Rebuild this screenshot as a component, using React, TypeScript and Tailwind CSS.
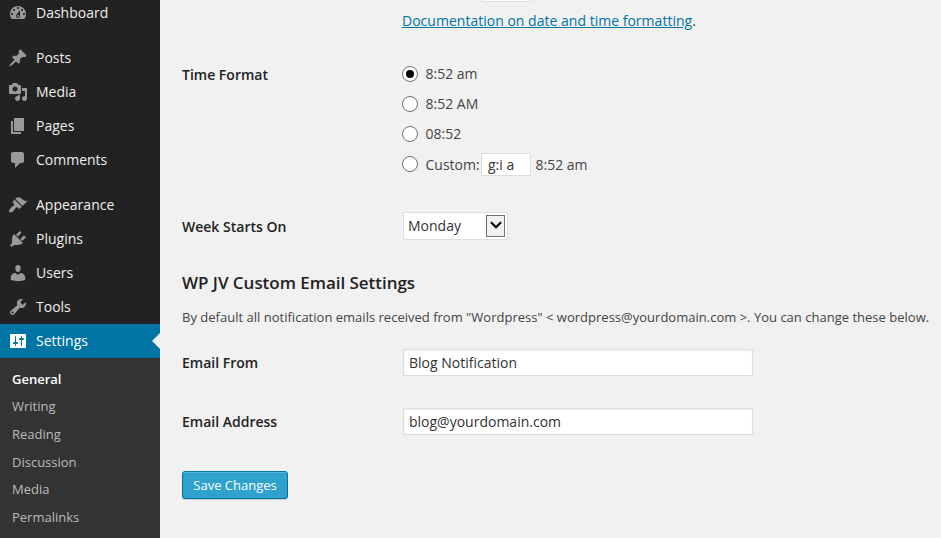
import type { ReactNode } from "react";

const icons = {
  dashboard:
    "M3.76 16h12.48c1.1-1.37 1.76-3.11 1.76-5 0-4.42-3.58-8-8-8s-8 3.58-8 8c0 1.89.66 3.63 1.76 5zM10 4c.55 0 1 .45 1 1s-.45 1-1 1-1-.45-1-1 .45-1 1-1zM6 6c.55 0 1 .45 1 1s-.45 1-1 1-1-.45-1-1 .45-1 1-1zm8 0c.55 0 1 .45 1 1s-.45 1-1 1-1-.45-1-1 .45-1 1-1zm-5.37 5.55L12 7v6c0 1.1-.9 2-2 2s-2-.9-2-2c0-.57.24-1.08.63-1.45zM4 10c.55 0 1 .45 1 1s-.45 1-1 1-1-.45-1-1 .45-1 1-1zm12 0c.55 0 1 .45 1 1s-.45 1-1 1-1-.45-1-1 .45-1 1-1zm-5 3c0-.55-.45-1-1-1s-1 .45-1 1 .45 1 1 1 1-.45 1-1z",
  posts:
    "M10.44 3.02l1.82-1.82 6.36 6.35-1.83 1.82c-1.05-.68-2.48-.57-3.41.36l-.75.75c-.92.93-1.04 2.35-.35 3.41l-1.83 1.82-2.41-2.41-2.8 2.79c-.42.42-3.38 2.71-3.8 2.29s1.86-3.39 2.28-3.81l2.79-2.79L4.1 9.36l1.83-1.82c1.05.69 2.48.57 3.4-.36l.75-.75c.93-.92 1.05-2.35.36-3.41z",
  media:
    "M13 11V4c0-.55-.45-1-1-1h-1.67L9 1H5L3.67 3H2c-.55 0-1 .45-1 1v7c0 .55.45 1 1 1h10c.55 0 1-.45 1-1zM7 4.5c1.38 0 2.5 1.12 2.5 2.5S8.38 9.5 7 9.5 4.5 8.38 4.5 7 5.62 4.5 7 4.5zM14 6h5v10.5c0 1.38-1.12 2.5-2.5 2.5S14 17.88 14 16.5s1.12-2.5 2.5-2.5c.17 0 .34.02.5.05V9h-3V6zm-4 8.05V13h2v3.5c0 1.38-1.12 2.5-2.5 2.5S7 17.88 7 16.5 8.12 14 9.5 14c.17 0 .34.02.5.05z",
  pages: "M6 15V2h10v13H6zm-1 1h8v2H3V5h2v11z",
  comments:
    "M5 2h9c1.1 0 2 .9 2 2v7c0 1.1-.9 2-2 2h-2l-5 5v-5H5c-1.1 0-2-.9-2-2V4c0-1.1.9-2 2-2z",
  appearance:
    "M14.48 11.06L7.41 3.99l1.5-1.5c.5-.56 2.3-.47 3.51.32 1.21.8 1.43 1.28 2.91 2.1 1.18.64 2.45 1.26 4.45.85zm-.71.71L6.7 4.7 4.93 6.47c-.39.39-.39 1.02 0 1.41l1.06 1.06c.39.39.39 1.03 0 1.42-.6.6-1.43 1.11-2.21 1.69-.35.26-.7.53-1.01.84C1.43 14.23.4 16.08 1.4 17.07c.99 1 2.84-.03 4.18-1.36.31-.31.58-.66.85-1.02.57-.78 1.08-1.61 1.69-2.21.39-.39 1.02-.39 1.41 0l1.06 1.06c.39.39 1.02.39 1.41 0z",
  plugins:
    "M13.11 4.36L9.87 7.6 8 5.73l3.24-3.24c.35-.34 1.05-.2 1.56.32.52.51.66 1.21.31 1.55zm-8 1.77l.91-1.12 9.01 9.01-1.19.84c-.71.71-2.63 1.16-3.82 1.16H6.14L4.9 17.26c-.59.59-1.54.59-2.12 0-.59-.58-.59-1.53 0-2.12l1.24-1.24v-3.88c0-1.13.4-3.19 1.09-3.89zm7.26 3.97l3.24-3.24c.34-.35 1.04-.21 1.55.31.52.51.66 1.21.31 1.55l-3.24 3.25z",
  users:
    "M10 9.25c-2.27 0-2.73-3.44-2.73-3.44C7 4.02 7.82 2 9.97 2c2.16 0 2.98 2.02 2.71 3.81 0 0-.41 3.44-2.68 3.44zm0 2.57L12.72 10c2.39 0 4.52 2.33 4.52 4.53v2.49s-3.65 1.13-7.24 1.13c-3.65 0-7.24-1.13-7.24-1.13v-2.49c0-2.25 1.94-4.48 4.47-4.48z",
  tools:
    "M16.68 9.77c-1.34 1.34-3.3 1.67-4.95.99l-5.41 6.52c-.99.99-2.59.99-3.58 0s-.99-2.59 0-3.57l6.52-5.42c-.68-1.65-.35-3.61.99-4.95 1.28-1.28 3.12-1.62 4.72-1.06l-2.89 2.89 2.82 2.82 2.86-2.87c.53 1.58.18 3.39-1.08 4.65zM3.81 16.21c.4.39 1.04.39 1.43 0 .4-.4.4-1.04 0-1.43-.39-.4-1.03-.4-1.43 0-.39.39-.39 1.03 0 1.43z",
  settings:
    "M18 16V4c0-.55-.45-1-1-1H3c-.55 0-1 .45-1 1v12c0 .55.45 1 1 1h14c.55 0 1-.45 1-1zM8 11h1c.55 0 1 .45 1 1s-.45 1-1 1H8v1.5c0 .28-.22.5-.5.5s-.5-.22-.5-.5V13H6c-.55 0-1-.45-1-1s.45-1 1-1h1V5.5c0-.28.22-.5.5-.5s.5.22.5.5V11zm5-2h-1c-.55 0-1-.45-1-1s.45-1 1-1h1V5.5c0-.28.22-.5.5-.5s.5.22.5.5V7h1c.55 0 1 .45 1 1s-.45 1-1 1h-1v5.5c0 .28-.22.5-.5.5s-.5-.22-.5-.5V9z",
};

type IconName = keyof typeof icons;

function MenuItem({ icon, label, active = false }: { icon: IconName; label: string; active?: boolean }) {
  return (
    <li
      className={
        active
          ? "relative flex h-[34px] items-center bg-[#0074a2] pl-2 text-white"
          : "flex h-[34px] items-center pl-2 text-[#999]"
      }
    >
      <svg viewBox="0 0 20 20" className="size-5 shrink-0 fill-current" fillRule="evenodd">
        <path d={icons[icon]} />
      </svg>
      <span className={active ? "ml-2 text-white" : "ml-2 text-[#eee]"}>{label}</span>
      {active && (
        <span className="absolute top-1/2 right-0 -mt-2 border-y-8 border-r-8 border-y-transparent border-r-[#f1f1f1]" />
      )}
    </li>
  );
}

function SubMenu() {
  const items = ["Writing", "Reading", "Discussion", "Media", "Permalinks"];
  return (
    <ul className="grow bg-[#333] pt-[7px] pl-3 text-[13px] text-[#bbb]">
      <li className="flex h-[27.6px] items-center font-semibold text-white">General</li>
      {items.map((item) => (
        <li key={item} className="flex h-[27.6px] items-center">
          {item}
        </li>
      ))}
    </ul>
  );
}

function Sidebar() {
  return (
    <nav className="flex h-full w-40 shrink-0 flex-col bg-[#222] text-[14px] leading-[18px]">
      <ul className="-mt-1 shrink-0">
        <MenuItem icon="dashboard" label="Dashboard" />
        <li className="h-[11px]" />
        <MenuItem icon="posts" label="Posts" />
        <MenuItem icon="media" label="Media" />
        <MenuItem icon="pages" label="Pages" />
        <MenuItem icon="comments" label="Comments" />
        <li className="h-[11px]" />
        <MenuItem icon="appearance" label="Appearance" />
        <MenuItem icon="plugins" label="Plugins" />
        <MenuItem icon="users" label="Users" />
        <MenuItem icon="tools" label="Tools" />
        <MenuItem icon="settings" label="Settings" active />
      </ul>
      <SubMenu />
    </nav>
  );
}

function Radio({ checked = false }: { checked?: boolean }) {
  return (
    <span className="mr-[7.5px] flex size-4 shrink-0 items-center justify-center rounded-full border border-[#707070] bg-white">
      {checked && <span className="size-2 rounded-full bg-black" />}
    </span>
  );
}

function Row({ label, children }: { label: string; children: ReactNode }) {
  return (
    <div className="flex">
      <div className="w-[220px] shrink-0 font-semibold text-[#222]">{label}</div>
      <div>{children}</div>
    </div>
  );
}

function TextField({ value }: { value: string }) {
  return (
    <div className="-mt-[4px] ml-px flex h-[27px] w-[350px] items-center border border-[#ddd] bg-white pl-[5px] text-[#333] shadow-[inset_0_1px_2px_rgba(0,0,0,0.07)]">
      {value}
    </div>
  );
}

export default function App() {
  return (
    <div className="flex h-[538px] w-[941px] overflow-hidden bg-[#f1f1f1] font-['Open_Sans',sans-serif] text-[14px] leading-5 text-[#444]">
      <Sidebar />
      <main className="flex h-full grow flex-col pl-[22px] whitespace-nowrap">
        <div className="ml-[299px] h-[2px] w-[50px] shrink-0 border border-t-0 border-[#ddd] bg-white" />
        <p className="mt-[9px] ml-[220px] h-5">
          <span className="tracking-[0.015px] text-[#0074a2] underline">Documentation on date and time formatting</span>.
        </p>
        <div className="mt-[34px] h-[114px]">
          <Row label="Time Format">
            <div className="-mt-px flex h-5 items-center"><Radio checked />8:52 am</div>
            <div className="mt-[10px] flex h-5 items-center"><Radio />8:52 AM</div>
            <div className="mt-[10px] flex h-5 items-center"><Radio />08:52</div>
            <div className="mt-[10px] flex h-5 items-center">
              <Radio />
              <span className="w-[55.5px] pt-0.5">Custom:</span>
              <span className="mr-[4.5px] flex h-[23px] w-[50px] items-center border border-[#ddd] bg-white pt-0.5 pl-[6px] text-[#333]">
                g:i a
              </span>
              <span className="pt-0.5">8:52 am</span>
            </div>
          </Row>
        </div>
        <div className="mt-[38px] h-5">
          <Row label="Week Starts On">
            <div className="-mt-[5px] ml-px flex h-7 w-[105px] items-center justify-between border border-[#ddd] bg-white pr-0.5 pl-1 text-[#333]">
              Monday
              <span className="flex h-[22px] w-[19px] items-center justify-center border border-[#707070] bg-[#f0f0f0]">
                <svg viewBox="0 0 12 8" className="mb-0.5 h-2 w-3" fill="none" stroke="#000" strokeWidth="2.2">
                  <path d="M1 1.2l5 5 5-5" />
                </svg>
              </span>
            </div>
          </Row>
        </div>
        <h3 className="mt-[34px] h-6 text-[17px] leading-6 font-semibold tracking-[-0.03px] text-[#222]">
          WP JV Custom Email Settings
        </h3>
        <p className="mt-[12px] h-5 text-[13px] tracking-[0.01px]">
          By default all notification emails received from "Wordpress" &lt; wordpress@yourdomain.com &gt;. You can change
          these below.
        </p>
        <div className="mt-[26px] h-5">
          <Row label="Email From">
            <TextField value="Blog Notification" />
          </Row>
        </div>
        <div className="mt-[39px] h-5">
          <Row label="Email Address">
            <TextField value="blog@yourdomain.com" />
          </Row>
        </div>
        <button className="mt-[39px] h-7 w-[106px] rounded-[3px] border border-[#0074a2] bg-[#2ea2cc] text-[13px] leading-[26px] text-white shadow-[inset_0_1px_0_rgba(120,200,230,0.5),0_1px_0_rgba(0,0,0,0.15)]">
          Save Changes
        </button>
      </main>
    </div>
  );
}
